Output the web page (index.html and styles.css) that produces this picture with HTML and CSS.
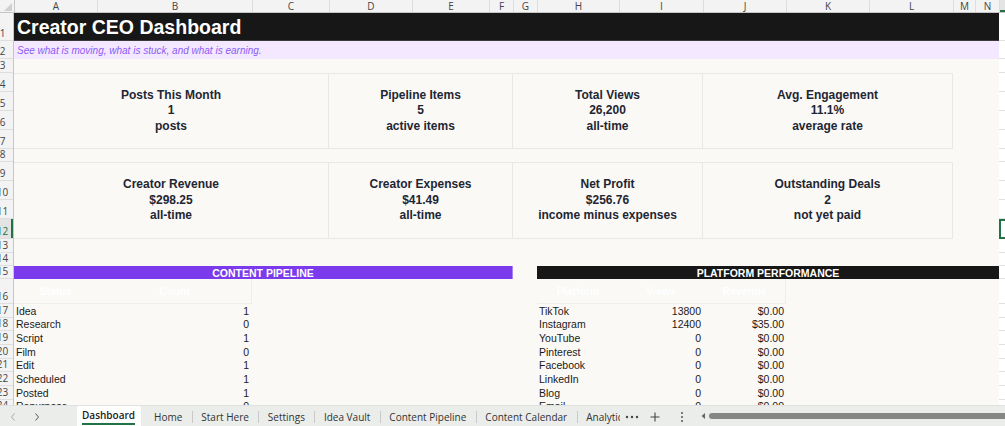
FILE: index.html
```html
<!DOCTYPE html>
<html>
<head>
<meta charset="utf-8">
<title>Creator CEO Dashboard</title>
<link rel="stylesheet" href="styles.css">
</head>
<body>
<div class="app">
  <div class="colheads">
    <div class="corner"><svg width="14" height="13" viewBox="0 0 14 13"><polygon points="12,3 12,11 4,11" fill="#cfcfcf"/></svg></div>
    <div class="ch wa">A</div>
    <div class="ch wb">B</div>
    <div class="ch wc">C</div>
    <div class="ch wd">D</div>
    <div class="ch we">E</div>
    <div class="ch wf">F</div>
    <div class="ch wg">G</div>
    <div class="ch wh">H</div>
    <div class="ch wi">I</div>
    <div class="ch wj">J</div>
    <div class="ch wk">K</div>
    <div class="ch wl">L</div>
    <div class="ch wm">M</div>
    <div class="ch wn">N</div>
    <div class="ch wo sel-col"></div>
  </div>

  <div class="sheetwrap">
    <div class="rowheads">
      <div class="rh h28"><span>1</span></div>
      <div class="rh h18"><span>2</span></div>
      <div class="rh h14"><span>3</span></div>
      <div class="rh h19"><span>4</span></div>
      <div class="rh h19"><span>5</span></div>
      <div class="rh h19"><span>6</span></div>
      <div class="rh h19"><span>7</span></div>
      <div class="rh h13"><span>8</span></div>
      <div class="rh h19"><span>9</span></div>
      <div class="rh h19"><span>10</span></div>
      <div class="rh h19"><span>11</span></div>
      <div class="rh h20 sel-row"><span>12</span></div>
      <div class="rh h14"><span>13</span></div>
      <div class="rh h13"><span>14</span></div>
      <div class="rh h13"><span>15</span></div>
      <div class="rh h25"><span>16</span></div>
      <div class="rh hd"><span>17</span></div>
      <div class="rh hd"><span>18</span></div>
      <div class="rh hd"><span>19</span></div>
      <div class="rh hd"><span>20</span></div>
      <div class="rh hd"><span>21</span></div>
      <div class="rh hd"><span>22</span></div>
      <div class="rh hd"><span>23</span></div>
      <div class="rh hd"><span>24</span></div>
    </div>

    <div class="grid">
      <div class="title">Creator CEO Dashboard</div>
      <div class="subtitle">See what is moving, what is stuck, and what is earning.</div>

      <div class="card top k1"><span>Posts This Month</span><span>1</span><span>posts</span></div>
      <div class="card top k2"><span>Pipeline Items</span><span>5</span><span>active items</span></div>
      <div class="card top k3"><span>Total Views</span><span>26,200</span><span>all-time</span></div>
      <div class="card top k4"><span>Avg. Engagement</span><span>11.1%</span><span>average rate</span></div>

      <div class="card bot k1"><span>Creator Revenue</span><span>$298.25</span><span>all-time</span></div>
      <div class="card bot k2"><span>Creator Expenses</span><span>$41.49</span><span>all-time</span></div>
      <div class="card bot k3"><span>Net Profit</span><span>$256.76</span><span>income minus expenses</span></div>
      <div class="card bot k4"><span>Outstanding Deals</span><span>2</span><span>not yet paid</span></div>

      <div class="bar bar-purple">CONTENT PIPELINE</div>
      <div class="bar bar-black">PLATFORM PERFORMANCE</div>

      <div class="thead thead-pipe"><span>Status</span><span>Count</span></div>
      <div class="thead thead-plat"><span>Platform</span><span>Views</span><span>Revenue</span></div>

      <div class="list list-pipe">
        <span>Idea</span><span class="num">1</span>
        <span>Research</span><span class="num">0</span>
        <span>Script</span><span class="num">1</span>
        <span>Film</span><span class="num">0</span>
        <span>Edit</span><span class="num">1</span>
        <span>Scheduled</span><span class="num">1</span>
        <span>Posted</span><span class="num">1</span>
        <span>Repurpose</span><span class="num">0</span>
      </div>

      <div class="list list-plat">
        <span>TikTok</span><span class="num">13800</span><span class="num">$0.00</span>
        <span>Instagram</span><span class="num">12400</span><span class="num">$35.00</span>
        <span>YouTube</span><span class="num">0</span><span class="num">$0.00</span>
        <span>Pinterest</span><span class="num">0</span><span class="num">$0.00</span>
        <span>Facebook</span><span class="num">0</span><span class="num">$0.00</span>
        <span>LinkedIn</span><span class="num">0</span><span class="num">$0.00</span>
        <span>Blog</span><span class="num">0</span><span class="num">$0.00</span>
        <span>Email</span><span class="num">0</span><span class="num">$0.00</span>
      </div>
    </div>

    <div class="colO">
      <div class="oc h28"></div>
      <div class="oc h18"></div>
      <div class="oc h14"></div>
      <div class="oc h19"></div>
      <div class="oc h19"></div>
      <div class="oc h19"></div>
      <div class="oc h19"></div>
      <div class="oc h13"></div>
      <div class="oc h19"></div>
      <div class="oc h19"></div>
      <div class="oc h19"></div>
      <div class="oc h20 sel-cell"></div>
      <div class="oc h14"></div>
      <div class="oc h13"></div>
      <div class="oc h13"></div>
      <div class="oc h25"></div>
      <div class="oc hd"></div>
      <div class="oc hd"></div>
      <div class="oc hd"></div>
      <div class="oc hd"></div>
      <div class="oc hd"></div>
      <div class="oc hd"></div>
      <div class="oc hd"></div>
      <div class="oc hd"></div>
    </div>
  </div>

  <div class="tabbar">
    <div class="nav">
      <svg class="chev" width="8" height="10" viewBox="0 0 8 10"><polyline points="5.5,1.5 2.5,5 5.5,8.5" fill="none" stroke="#a8a8a8" stroke-width="1"/></svg>
      <svg class="chev" width="8" height="10" viewBox="0 0 8 10"><polyline points="2.5,1.5 5.5,5 2.5,8.5" fill="none" stroke="#555" stroke-width="1"/></svg>
    </div>
    <div class="tabs">
      <div class="tab active">Dashboard</div>
      <div class="tab">Home</div>
      <div class="tab">Start Here</div>
      <div class="tab">Settings</div>
      <div class="tab">Idea Vault</div>
      <div class="tab">Content Pipeline</div>
      <div class="tab">Content Calendar</div>
      <div class="tab">Analytics</div>
    </div>
    <div class="tool more"><svg width="14" height="6" viewBox="0 0 14 6"><circle cx="2" cy="3" r="1.2" fill="#444"/><circle cx="7" cy="3" r="1.2" fill="#444"/><circle cx="12" cy="3" r="1.2" fill="#444"/></svg></div>
    <div class="tool add"><svg width="10" height="10" viewBox="0 0 10 10"><path d="M5 0.5V9.5M0.5 5H9.5" stroke="#444" stroke-width="1.1"/></svg></div>
    <div class="tool kebab"><svg width="4" height="12" viewBox="0 0 4 12"><circle cx="2" cy="2" r="1" fill="#555"/><circle cx="2" cy="6" r="1" fill="#555"/><circle cx="2" cy="10" r="1" fill="#555"/></svg></div>
    <div class="hscroll">
      <svg class="larrow" width="5" height="6" viewBox="0 0 5 6"><polygon points="4,0 4,6 0.5,3" fill="#666"/></svg>
      <div class="thumb"></div>
    </div>
  </div>
</div>
</body>
</html>
```

FILE: styles.css
```css
* { box-sizing: border-box; margin: 0; padding: 0; }

html, body {
  width: 1005px;
  height: 426px;
  overflow: hidden;
  background: #ffffff;
}

body {
  font-family: "Liberation Sans", Arial, sans-serif;
  color: #1a1a1a;
}

.app {
  display: flex;
  flex-direction: column;
  width: 1005px;
  height: 426px;
}

/* ---------- column headers ---------- */
.colheads {
  display: flex;
  flex: 0 0 13px;
  height: 13px;
  background: #f3f3f3;
  border-bottom: 1px solid #c6c6c6;
  font-family: "Open Sans", "Noto Sans", sans-serif;
  font-size: 10px;
  color: #454545;
}

.corner {
  flex: 0 0 14px;
  border-right: 1px solid #c6c6c6;
  display: flex;
}

.ch {
  display: flex;
  align-items: center;
  justify-content: center;
  border-right: 1px solid #dddddd;
  line-height: 12px;
}

.wa { flex: 0 0 83px; }
.wb { flex: 0 0 155px; }
.wc { flex: 0 0 77px; }
.wd { flex: 0 0 83px; }
.we { flex: 0 0 77px; }
.wf { flex: 0 0 24px; }
.wg { flex: 0 0 24px; }
.wh { flex: 0 0 82px; }
.wi { flex: 0 0 84px; }
.wj { flex: 0 0 83px; }
.wk { flex: 0 0 83px; }
.wl { flex: 0 0 84px; }
.wm { flex: 0 0 22px; }
.wn { flex: 0 0 24px; }
.wo { flex: 1 1 auto; border-right: none; }

.sel-col {
  background: #e4e4e4;
  border-bottom: 2px solid #217346;
}

/* ---------- sheet body ---------- */
.sheetwrap {
  display: flex;
  flex: 0 0 392px;
  height: 392px;
  overflow: hidden;
}

.rowheads {
  flex: 0 0 14px;
  display: flex;
  flex-direction: column;
  background: #f3f3f3;
  border-right: 1px solid #c6c6c6;
  font-family: "Open Sans", "Noto Sans", sans-serif;
  font-size: 10px;
  color: #454545;
  overflow: hidden;
}

.rh {
  flex: 0 0 auto;
  display: flex;
  align-items: flex-end;
  border-bottom: 1px solid #dedede;
  padding-bottom: 2px;
  line-height: 10px;
}

.rh span {
  display: block;
  width: 22px;
  margin-left: -8px;
  text-align: center;
}

.sel-row {
  background: #e3e3e3;
  color: #217346;
  box-shadow: inset -2px 0 0 #217346;
}

.h28 { height: 28px; }
.h18 { height: 18px; }
.h14 { height: 14px; }
.h19 { height: 19px; }
.h13 { height: 13px; }
.h20 { height: 20px; }
.h25 { height: 25px; }
.hd  { height: 13.67px; }

.grid {
  flex: 0 0 985px;
  display: grid;
  grid-template-columns: 83px 155px 77px 83px 77px 24px 24px 82px 84px 83px 83px 84px 22px 24px;
  grid-template-rows: 28px 18px 14px 19px 19px 19px 19px 13px 19px 19px 19px 20px 14px 13px 13px 25px repeat(8, 13.67px);
  background: #faf9f6;
  font-size: 10.5px;
}

.colO {
  flex: 1 1 auto;
  display: flex;
  flex-direction: column;
  background: #ffffff;
}

.oc {
  flex: 0 0 auto;
  border-bottom: 1px solid #e1e1e1;
}

.sel-cell {
  border: 2px solid #217346;
  border-right: none;
}

/* ---------- title ---------- */
.title {
  grid-column: 1 / -1;
  grid-row: 1;
  background: #171717;
  color: #ffffff;
  font-weight: bold;
  font-size: 19.5px;
  display: flex;
  align-items: center;
  padding: 1px 0 0 3px;
  border-bottom: 1px solid #3a3a3a;
}

.subtitle {
  grid-column: 1 / -1;
  grid-row: 2;
  background: #f3e8ff;
  color: #8b5cf6;
  font-style: italic;
  font-size: 10px;
  display: flex;
  align-items: center;
  padding-left: 3px;
}

/* ---------- cards ---------- */
.card {
  display: flex;
  flex-direction: column;
  align-items: center;
  justify-content: center;
  font-weight: bold;
  font-size: 12px;
  line-height: 15.5px;
  color: #1f2633;
  border-top: 1px solid #e9e8e4;
  border-bottom: 1px solid #e9e8e4;
  border-right: 1px solid #e9e8e4;
  text-align: center;
}

.top { grid-row: 4 / 8; }
.bot { grid-row: 9 / 13; }
.k1 { grid-column: 1 / 4; }
.k2 { grid-column: 4 / 7; }
.k3 { grid-column: 7 / 10; }
.k4 { grid-column: 10 / 13; }

/* ---------- section bars ---------- */
.bar {
  grid-row: 15;
  display: flex;
  align-items: center;
  justify-content: center;
  color: #ffffff;
  font-weight: bold;
  font-size: 10.5px;
}

.bar-purple {
  grid-column: 1 / 7;
  background: #7c3aed;
  border-right: 1px solid #a884f3;
}

.bar-black {
  grid-column: 8 / 15;
  background: #171717;
}

/* ---------- tables ---------- */
.thead {
  grid-row: 16;
  display: grid;
  align-items: center;
  color: #ffffff;
  font-weight: bold;
  font-size: 10.5px;
  text-align: center;
  border-bottom: 1px solid #efeeea;
  border-right: 1px solid #efeeea;
}

.thead-pipe {
  grid-column: 1 / 3;
  grid-template-columns: 83px 155px;
}

.thead-plat {
  grid-column: 8 / 11;
  grid-template-columns: 82px 84px 83px;
}

.list {
  grid-row: 17 / span 8;
  display: grid;
  grid-auto-rows: 13.67px;
  align-items: center;
  font-size: 10.5px;
  color: #1a1a1a;
  white-space: nowrap;
}

.list span { padding-left: 2px; }
.list .num { text-align: right; padding: 0 3px 0 0; }

.list-pipe {
  grid-column: 1 / 3;
  grid-template-columns: 83px 155px;
}

.list-plat {
  grid-column: 8 / 11;
  grid-template-columns: 82px 84px 83px;
}

.list-plat .num { padding-right: 2px; }

/* ---------- tab bar ---------- */
.tabbar {
  flex: 0 0 21px;
  height: 21px;
  display: flex;
  align-items: stretch;
  background: #ebedea;
  border-top: 1px solid #e0e2df;
  font-family: "Open Sans", "Noto Sans", sans-serif;
  font-size: 10px;
  color: #333333;
  white-space: nowrap;
}

.nav {
  flex: 0 0 77px;
  display: flex;
  align-items: center;
  padding-left: 9px;
  gap: 16px;
  padding-top: 2px;
}

.tabs {
  flex: 0 0 543px;
  display: flex;
  overflow: hidden;
}

.tab {
  display: flex;
  align-items: center;
  padding: 2px 9.5px 0 9.5px;
  position: relative;
}

.tab + .tab::before {
  content: "";
  position: absolute;
  left: 0;
  top: 5px;
  height: 12px;
  border-left: 1px solid #c9c9c9;
}

.tab.active + .tab::before { display: none; }
.tab.active + .tab { padding-left: 13px; }

.tab.active {
  background: #ffffff;
  font-weight: 600;
  color: #222222;
  padding: 0 6px 2px 5px;
  border-radius: 2px 2px 0 0;
}

.tab.active::after {
  content: "";
  position: absolute;
  left: 5px;
  right: 6px;
  bottom: 1px;
  height: 2px;
  background: #217346;
}

.tool {
  display: flex;
  align-items: center;
  justify-content: center;
  padding-top: 1px;
}

.more { flex: 0 0 24px; margin-left: 0; }
.add { flex: 0 0 22px; }
.kebab { flex: 0 0 32px; }

.hscroll {
  flex: 1 1 auto;
  display: flex;
  align-items: center;
  gap: 3px;
  padding-left: 3px;
}

.larrow { flex: 0 0 5px; }

.thumb {
  flex: 1 1 auto;
  height: 6px;
  border-radius: 3px 0 0 3px;
  background: #858585;
}
```
